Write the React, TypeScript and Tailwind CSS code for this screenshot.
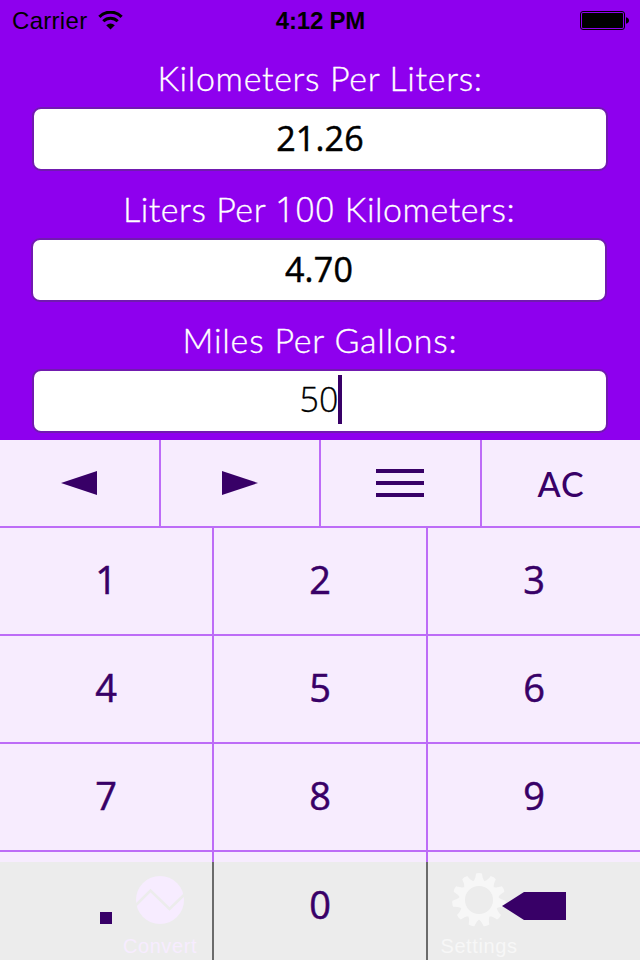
import type { ReactNode } from "react";

type Field = {
  label: ReactNode;
  value: string;
  labelClass: string;
  boxClass: string;
  active?: boolean;
};

const fields: Field[] = [
  {
    label: "Kilometers Per Liters:",
    value: "21.26",
    labelClass: "tracking-[0.65px]",
    boxClass: "mx-[32px]",
  },
  {
    label: (
      <>
        Liters Per <span className="font-['Open_Sans',sans-serif]">100</span> Kilometers:
      </>
    ),
    value: "4.70",
    labelClass: "tracking-[0.53px] pr-[2px]",
    boxClass: "ml-[31px] mr-[33px]",
  },
  {
    label: "Miles Per Gallons:",
    value: "50",
    labelClass: "tracking-[0.8px]",
    boxClass: "mx-[32px]",
    active: true,
  },
];

const digitRows = [
  ["1", "2", "3"],
  ["4", "5", "6"],
  ["7", "8", "9"],
];

function StatusBar() {
  return (
    <header className="grid h-10 grid-cols-3 items-center pl-3 pr-[11px] font-['Liberation_Sans',sans-serif] text-[24px] text-black">
      <div className="flex items-center gap-[11px]">
        <span className="pt-px tracking-[0.3px]">Carrier</span>
        <svg width="25" height="19" viewBox="0 0 25 19" fill="none" stroke="#000">
          <path d="M1.4 5.8a15.7 15.7 0 0 1 22.2 0" strokeWidth="3.2" />
          <path d="M5.3 10.3a10.2 10.2 0 0 1 14.4 0" strokeWidth="3" />
          <path d="M8.2 14.2a6.1 6.1 0 0 1 8.6 0l-4.3 4.3z" fill="#000" stroke="none" />
        </svg>
      </div>
      <span className="pt-px text-center font-bold tracking-[-0.2px]">4:12 PM</span>
      <div className="flex justify-end">
        <svg width="49" height="19" viewBox="0 0 49 19">
          <rect x="0.5" y="0.5" width="44" height="18" rx="2.5" fill="none" stroke="#000" />
          <rect x="2" y="2" width="41" height="15" rx="1" fill="#000" />
          <path d="M46 6.2c2 .6 3 1.600 3 3.300s-1 2.700-3 3.300z" fill="#000" />
        </svg>
      </div>
    </header>
  );
}

function FieldRow({ label, value, labelClass, boxClass, active }: Field) {
  return (
    <div className="h-[131px]">
      <div
        className={`h-[67px] whitespace-pre pt-[21px] text-center text-[34px] font-light leading-[34px] text-white [-webkit-text-stroke:0.35px_white] ${labelClass}`}
      >
        {label}
      </div>
      <div
        className={`flex h-[64px] justify-center rounded-[9px] border-2 border-[#711ab0] bg-white font-['Open_Sans',sans-serif] text-[34px] text-black ${boxClass}`}
      >
        {active ? (
          <>
            <span className="pl-[2px] font-light leading-[57px] [-webkit-text-stroke:0.3px_black]">
              {value}
            </span>
            <span className="mt-1 h-[49px] w-1 bg-[#380067]" />
          </>
        ) : (
          <span className="font-medium leading-[59px] tracking-[0.2px] [-webkit-text-stroke:0.5px_black]">
            {value}
          </span>
        )}
      </div>
    </div>
  );
}

function Key({ children, className = "" }: { children: ReactNode; className?: string }) {
  return (
    <button className={`flex items-center justify-center border-[#bd6cf7] ${className}`}>
      {children}
    </button>
  );
}

function Digit({ children }: { children: ReactNode }) {
  return (
    <span className="font-['Open_Sans',sans-serif] text-[38px] font-medium leading-[38px] [-webkit-text-stroke:0.5px_#380067]">
      {children}
    </span>
  );
}

function TabIcons() {
  return (
    <>
      <div className="absolute left-[100px] top-[11px] flex w-[120px] flex-col items-center text-[#f7ecff]">
        <svg width="54" height="54" viewBox="0 0 54 54">
          <circle cx="27" cy="27" r="24" fill="#f7ecff" />
          <path d="M2 33l15.500-15.500L36.500 36 52 21" fill="none" stroke="#ececec" strokeWidth="2.500" />
        </svg>
        <span className="mt-[7px] text-[20px] leading-6 tracking-[0.600px]">Convert</span>
      </div>
      <div className="absolute left-[419px] top-[11px] flex w-[120px] flex-col items-center text-[#f7f7f7]">
        <svg width="54" height="54" viewBox="0 0 54 54">
          <g fill="#f7f7f7" transform="translate(27 27)">
            {Array.from({ length: 11 }, (_, i) => (
              <path
                key={i}
                d="M-6-18C-3.500-21-3.500-23.500-3-26.500q3-1 6 0C3.500-23.500 3.500-21 6-18z"
                transform={`rotate(${(i * 360) / 11})`}
              />
            ))}
          </g>
          <circle cx="27" cy="27" r="16.800" fill="none" stroke="#f7f7f7" strokeWidth="5.600" />
        </svg>
        <span className="mt-[7px] text-[20px] leading-6 tracking-[0.600px]">Settings</span>
      </div>
    </>
  );
}

export default function App() {
  return (
    <div className="flex h-[960px] w-[640px] flex-col overflow-hidden bg-[#8e00ee] font-['Lato',sans-serif]">
      <StatusBar />
      <main className="h-[400px]">
        {fields.map((field) => (
          <FieldRow key={field.value} {...field} />
        ))}
      </main>

      <section className="flex flex-1 flex-col bg-[#f7ecfe] text-[#380067]">
        <div className="grid h-[88px] grid-cols-[161px_160px_161px_158px] border-b-2 border-[#bd6cf7]">
          <Key className="border-r-2 pr-[2px]">
            <svg width="36" height="24" viewBox="0 0 36 24" fill="#380067">
              <path d="M0 12L36 0v24z" />
            </svg>
          </Key>
          <Key className="border-r-2">
            <svg width="36" height="24" viewBox="0 0 36 24" fill="#380067">
              <path d="M36 12L0 0v24z" />
            </svg>
          </Key>
          <Key className="border-r-2 pr-[2px]">
            <span className="flex flex-col gap-2">
              <span className="h-1 w-12 bg-[#380067]" />
              <span className="h-1 w-12 bg-[#380067]" />
              <span className="h-1 w-12 bg-[#380067]" />
            </span>
          </Key>
          <Key>
            <span className="pt-px text-[34px] font-medium leading-none tracking-[0.8px]">AC</span>
          </Key>
        </div>

        {digitRows.map((row) => (
          <div
            key={row[0]}
            className="grid h-[108px] grid-cols-[214px_214px_212px] border-b-2 border-[#bd6cf7]"
          >
            {row.map((digit, i) => (
              <Key key={digit} className={i < 2 ? "border-r-2 pb-[4px]" : "pb-[4px]"}>
                <Digit>{digit}</Digit>
              </Key>
            ))}
          </div>
        ))}

        <div className="grid h-[10px] grid-cols-[214px_214px_212px]">
          <div className="border-r-2 border-[#bd6cf7]" />
          <div className="border-r-2 border-[#bd6cf7]" />
        </div>
        {/* last key row shows through the translucent tab bar */}
        <div className="relative h-[98px] bg-[#ececec]">
          <div className="font-['Liberation_Sans',sans-serif]">
            <TabIcons />
          </div>
          <div className="relative grid h-full grid-cols-[214px_214px_212px]">
            <div className="flex justify-center border-r-2 border-[#6b6b6b] pt-[50px]">
              <span className="size-3 bg-[#380067]" />
            </div>
            <div className="flex justify-center border-r-2 border-[#6b6b6b] pt-[23px]">
              <Digit>0</Digit>
            </div>
            <div className="flex justify-center pt-[30px]">
              <svg width="64" height="28" viewBox="0 0 64 28" fill="#380067">
                <path d="M0 14L22 0h42v28H22z" />
              </svg>
            </div>
          </div>
        </div>
      </section>
    </div>
  );
}
